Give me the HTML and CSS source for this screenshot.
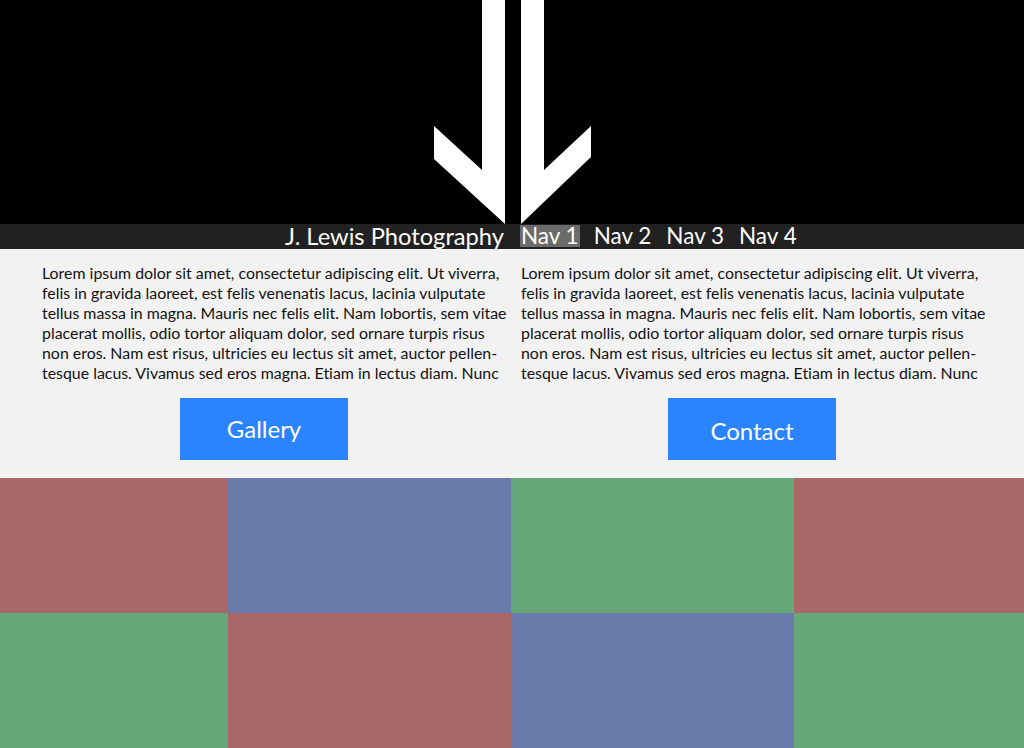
FILE: index.html
```html
<!DOCTYPE html>
<html lang="en">
<head>
<meta charset="utf-8">
<title>J. Lewis Photography</title>
<link rel="stylesheet" href="styles.css">
</head>
<body>
<header class="hero">
  <svg class="logo" width="160" height="224" viewBox="432 0 160 224" aria-hidden="true">
    <polygon fill="#fff" points="482,0 505,0 505,224 434,159 434,126 482,170"/>
    <polygon fill="#fff" points="521,0 544,0 544,170 591,126 591,157 521,224"/>
  </svg>
</header>
<nav class="navbar">
  <div class="nav-left"><span class="brand">J. Lewis Photography</span></div>
  <ul class="nav-right">
    <li class="nav-item active">Nav 1</li>
    <li class="nav-item">Nav 2</li>
    <li class="nav-item">Nav 3</li>
    <li class="nav-item">Nav 4</li>
  </ul>
</nav>
<main class="intro">
  <section class="col col-left">
    <p class="copy">Lorem ipsum dolor sit amet, consectetur adipiscing elit. Ut viverra,<br>felis in gravida laoreet, est felis venenatis lacus, lacinia vulputate<br>tellus massa in magna. Mauris nec felis elit. Nam lobortis, sem vitae<br>placerat mollis, odio tortor aliquam dolor, sed ornare turpis risus<br>non eros. Nam est risus, ultricies eu lectus sit amet, auctor pellen-<br>tesque lacus. Vivamus sed eros magna. Etiam in lectus diam. Nunc</p>
    <a class="btn btn-gallery" href="#">Gallery</a>
  </section>
  <section class="col col-right">
    <p class="copy">Lorem ipsum dolor sit amet, consectetur adipiscing elit. Ut viverra,<br>felis in gravida laoreet, est felis venenatis lacus, lacinia vulputate<br>tellus massa in magna. Mauris nec felis elit. Nam lobortis, sem vitae<br>placerat mollis, odio tortor aliquam dolor, sed ornare turpis risus<br>non eros. Nam est risus, ultricies eu lectus sit amet, auctor pellen-<br>tesque lacus. Vivamus sed eros magna. Etiam in lectus diam. Nunc</p>
    <a class="btn btn-contact" href="#">Contact</a>
  </section>
</main>
<section class="tiles">
  <div class="tile red"></div>
  <div class="tile blue"></div>
  <div class="tile green"></div>
  <div class="tile red"></div>
  <div class="tile green"></div>
  <div class="tile red"></div>
  <div class="tile blue"></div>
  <div class="tile green"></div>
</section>
</body>
</html>
```

FILE: styles.css
```css
* { box-sizing: border-box; }
html, body { margin: 0; padding: 0; }
body {
  width: 1024px;
  height: 748px;
  overflow: hidden;
  font-family: "Lato", "Open Sans", sans-serif;
  font-variant-ligatures: none;
  background: #f2f2f2;
}
.hero {
  height: 224px;
  background: #000;
  display: flex;
  justify-content: center;
  align-items: flex-start;
}
.logo { display: block; }
.navbar {
  height: 25px;
  background: #212121;
  display: flex;
  color: #fff;
}
.nav-left {
  flex: 1;
  display: flex;
  justify-content: flex-end;
  padding-right: 7px;
}
.brand {
  font-size: 23.7px;
  line-height: 24px;
  white-space: nowrap;
}
.nav-right {
  flex: 1;
  display: flex;
  list-style: none;
  margin: 0;
  padding: 0 0 0 9px;
  gap: 13px;
  align-items: flex-start;
}
.nav-item {
  margin-top: 1px;
  font-size: 22.5px;
  line-height: 22px;
  height: 22px;
  padding: 0 1px;
  white-space: nowrap;
}
.nav-item.active { background: #6b6b6b; }
.intro {
  height: 229px;
  display: flex;
  background: #f2f2f2;
}
.col {
  display: flex;
  flex-direction: column;
  align-items: flex-start;
}
.col-left { padding-left: 42px; width: 521px; }
.col-right { padding-left: 0; }
.copy {
  margin: 14px 0 0;
  font-size: 15.9px;
  line-height: 20px;
  color: #111;
  white-space: nowrap;
}
.btn {
  display: flex;
  align-items: center;
  justify-content: center;
  width: 168px;
  height: 62px;
  margin-top: 15px;
  background: #2b84ff;
  color: #fff;
  font-size: 24px;
  text-decoration: none;
}
.btn-gallery { margin-left: 138px; padding-bottom: 2px; }
.btn-contact { margin-left: 147px; padding-top: 3px; }
.tiles {
  display: grid;
  grid-template-columns: 228px 283px 283px 1fr;
  grid-template-rows: 135px 135px;
}
.red { background: #a96868; }
.blue { background: #6a7aaa; }
.green { background: #67a87a; }
```
